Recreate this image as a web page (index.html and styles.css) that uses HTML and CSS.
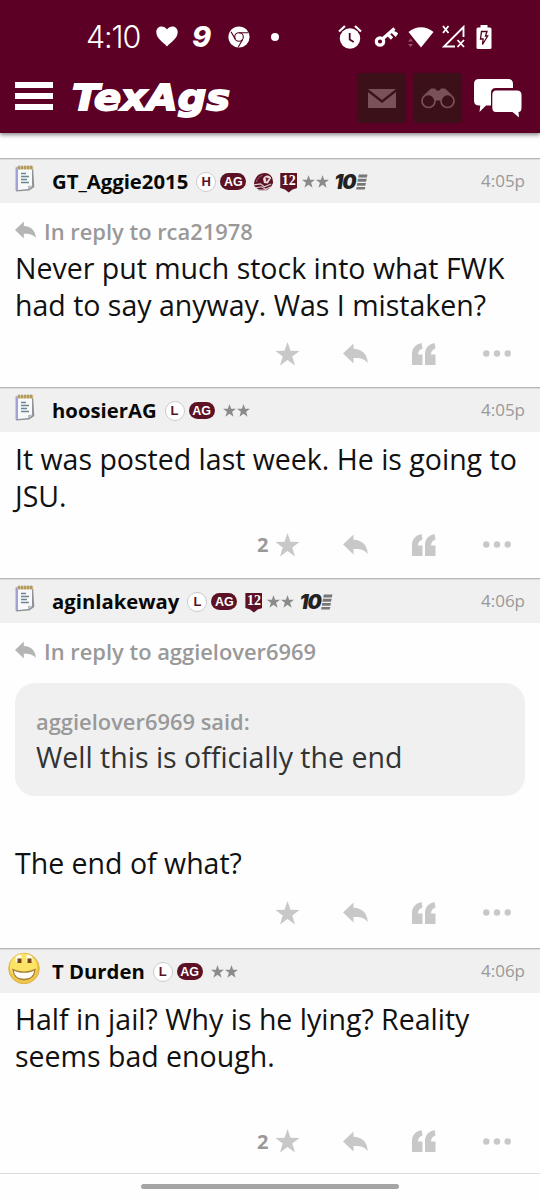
FILE: index.html
```html
<!DOCTYPE html>
<html lang="en">
<head>
<meta charset="utf-8">
<title>TexAgs</title>
<link rel="stylesheet" href="styles.css">
</head>
<body>
<svg class="defs" width="0" height="0" aria-hidden="true">
  <symbol id="star" viewBox="0 0 24 24"><path d="M12 0l3 8.800 9 .1-7.200 5.500L19.500 23.500 12 18.100 4.500 23.500 7.200 14.400 0 8.900l9-.1z"/></symbol>
  <symbol id="reply" viewBox="0 0 25 21"><path d="M0 10.500L10.500.5v5.200C18 5.700 24.500 10.500 24.800 20 21 15.500 17 14.700 10.500 15v5.500z"/></symbol>
  <symbol id="quote" viewBox="0 0 24 22"><path d="M9.500 0C3 1.500 0 5.500 0 11v11h10.500V11.500H6C6 8.500 7.500 6.500 10.500 5.500z"/><path d="M22.500 0C16 1.500 13 5.500 13 11v11h10.500V11.500H19c0-3 1.500-5 4.500-6z"/></symbol>
  <symbol id="dots" viewBox="0 0 28 7"><circle cx="3.300" cy="3.500" r="3.200"/><circle cx="14" cy="3.500" r="3.200"/><circle cx="24.700" cy="3.500" r="3.200"/></symbol>
  <symbol id="note" viewBox="0 0 20 27">
    <path d="M1 2.500L18 1l1.300 21-5 3.500L1 26.500z" fill="#8f9296"/>
    <path d="M.5 2.500h2.500v23H.5z" fill="#a3a2d6"/>
    <path d="M3 3h14v18.500L13.500 24 3 25z" fill="#f7f9fa"/>
    <path d="M13 24.500v-3.500l5-.5z" fill="#b9bcc0"/>
    <path d="M2 1.300h16v3H2z" fill="#d6bd78"/>
    <path d="M4 .5v4M7 .5v4M10 .5v4M13 .5v4M16 .5v4" stroke="#8b7a4c" stroke-width="1"/>
    <path d="M6 8.500h5M6 11.500h8M6 14.500h6M6 17.500h8" stroke="#6d8791" stroke-width="1.300"/>
  </symbol>
  <symbol id="smile" viewBox="0 0 32 32">
    <circle cx="16" cy="16.500" r="15.300" fill="#f0c64a" stroke="#d9aa38" stroke-width=".8"/>
    <ellipse cx="15.500" cy="14.500" rx="13.500" ry="13" fill="#fbe365"/>
    <path d="M7.500 7q1-5 6-4v7h-6zM18.500 3q5-1 6 4v3h-6z" fill="#fffbe6"/>
    <path d="M9.500 6.500h4v4.500h-4zM19.500 6.500h4v4.500h-4z" fill="#74431b"/>
    <path d="M5 17.500c2 1 4 1.800 5.500 2 3.500.8 7.500.8 11 0 1.500-.2 3.500-1 5.500-2-.5 6.500-4.500 10-11 10S5.500 24 5 17.500z" fill="#fffdf5" stroke="#a37a35" stroke-width="1.300"/>
  </symbol>
  <symbol id="helmet" viewBox="0 0 22 20">
    <path d="M1 14C1 5 6 .5 12.500.5 18 .5 21 5 21 11l-2 4-5 4H7z" fill="#5c1224"/>
    <path d="M10.500 6.500c2-4 7-4.500 8.500-.5l-3.500 5.500-4-.5z" fill="#ead9dc"/>
    <path d="M13 5l4 1-3 4z" fill="#7a2636"/>
    <path d="M1 13l7-1 4 3 7-3M3 16l6-1 4 2.500 6-2.500M5 18.500h10" stroke="#dccfd1" stroke-width="1.200" fill="none"/>
    <path d="M3.500 10C4.500 6 7 4 10 3" stroke="#a4626f" fill="none"/>
  </symbol>
  <symbol id="bars" viewBox="0 0 12 16">
    <path d="M2.800.5h8.700l-.7 3H2.200zM2 4.800h8.700l-.7 3H1.400zM1.300 9h8.700l-.7 2.800H.8zM.6 12.900h8.700l-.6 2.600H.1z" fill="#777"/>
  </symbol>
</svg>

<header class="top">
  <div class="status">
    <span class="clock">4:10</span>
    <svg class="s-heart" width="22" height="21" viewBox="0 0 22 21"><path d="M11 20.500C7 16 .3 12.500.3 6 .3-.2 8-1.500 11 3.500 14-1.500 21.700-.2 21.700 6c0 6.500-6.700 10-10.700 14.500z" fill="#fff"/></svg>
    <span class="s-nine">9</span>
    <svg class="s-chrome" width="22" height="22" viewBox="0 0 22 22"><circle cx="11" cy="11" r="10.600" fill="#fff"/><g fill="none" stroke="#500020" stroke-width="1.100"><circle cx="11" cy="11" r="4.300"/><path d="M3 5.800l4.300 7.300M11 6.700h9.500M14.700 13.200L10.300 21"/></g></svg>
    <i class="s-dot"></i>
    <svg class="s-alarm" width="24" height="24" viewBox="0 0 24 24"><circle cx="12" cy="13.500" r="10.200" fill="#fff"/><path d="M1 6.500L7 1M17 1l6 5.500" stroke="#fff" stroke-width="2.200"/><path d="M11.700 8v6.500l4 2.500" fill="none" stroke="#500020" stroke-width="1.800"/></svg>
    <svg class="s-key" width="24" height="22" viewBox="0 0 24 22"><circle cx="6" cy="15.500" r="3.700" fill="none" stroke="#fff" stroke-width="3.200"/><path d="M9 12.500L20.500 2.500M14 8.500l4 4M18 5l3.500 3.500 1.500-2" fill="none" stroke="#fff" stroke-width="3.200"/></svg>
    <svg class="s-wifi" width="26" height="22" viewBox="0 0 26 22"><path d="M.5 6c7-6.500 18-6.500 25 0L13 21.500z" fill="#fff"/><path d="M0 15.500l2.500-3 2.500 3zM0 18l2.500 3L5 18z" fill="#985069"/></svg>
    <svg class="s-signal" width="23" height="23" viewBox="0 0 23 23"><path d="M21.500 12V2L2 21.500h11" fill="none" stroke="#fff" stroke-width="1.900"/><path d="M1 1l5.500 7M6.500 1L1 8M15.500 15l6.500 7M22 15l-6.500 7" stroke="#fff" stroke-width="1.800"/></svg>
    <svg class="s-battery" width="16" height="24" viewBox="0 0 16 24"><path d="M4.500 0h7v2.500H14A1.500 1.500 0 0 1 15.500 4v18.500A1.500 1.500 0 0 1 14 24H2A1.500 1.500 0 0 1 .5 22.500V4A1.500 1.500 0 0 1 2 2.500h2.500z" fill="#fff"/><path d="M5.500 6.500H11l-1.500 4.500h2.200L6.500 19.500l.6-5.500H4.500z" fill="none" stroke="#500020" stroke-width="1.300"/></svg>
  </div>
  <div class="nav">
    <div class="burger"><i></i><i></i><i></i></div>
    <svg class="logo" width="162" height="44" viewBox="0 0 162 44"><text x="0" y="34" textLength="158" lengthAdjust="spacingAndGlyphs">TexAgs</text></svg>
    <div class="tile"><svg width="28" height="19" viewBox="0 0 28 19"><path d="M0 0h28L14 11z"/><path d="M0 3l14 11L28 3v16H0z"/></svg></div>
    <div class="tile"><svg width="34" height="21" viewBox="0 0 34 21"><g fill="none" stroke="#7a5059" stroke-width="1.700"><circle cx="7.500" cy="13" r="6.500"/><circle cx="26.500" cy="13" r="6.500"/></g><path d="M3 7L10 .5h4l1.500 2h3l1.500-2h4L31 7c-5-1.500-9 0-10.500 5.500h-7C12 7 8 5.500 3 7z"/></svg></div>
    <svg class="chat" width="48" height="39" viewBox="0 0 48 39"><path d="M5 0h29q5 0 5 5v4H22q-5 0-5 5v12.500h-5L5.500 33l.8-6.500H5q-5 0-5-5V5q0-5 5-5z" fill="#fff"/><path d="M22 11.500h21q4.500 0 4.500 4.500v12.500q0 4.500-3 4.500l.5 5.500-6.500-5.500H22q-3.700 0-3.700-4.500V16q0-4.500 3.700-4.500z" fill="#fff"/></svg>
  </div>
</header>

<main>
  <div class="prev"></div>

  <article class="post p1">
    <div class="head"><svg class="avatar"><use href="#note"/></svg><b class="name">GT_Aggie2015</b>
      <span class="badge">H</span><span class="ag">AG</span><svg class="helmet"><use href="#helmet"/></svg><span class="shield">12</span><svg class="st"><use href="#star"/></svg><svg class="st"><use href="#star"/></svg><span class="ten">10</span><svg class="bars"><use href="#bars"/></svg>
      <time>4:05p</time></div>
    <div class="body">
      <div class="re"><svg><use href="#reply"/></svg><span>In reply to rca21978</span></div>
      <p>Never put much stock into what FWK<br>had to say anyway. Was I mistaken?</p>
    </div>
    <div class="actions"><span class="count"></span><svg class="a-star"><use href="#star"/></svg><svg class="a-reply"><use href="#reply"/></svg><svg class="a-quote"><use href="#quote"/></svg><svg class="a-dots"><use href="#dots"/></svg></div>
  </article>

  <article class="post p2">
    <div class="head"><svg class="avatar"><use href="#note"/></svg><b class="name">hoosierAG</b>
      <span class="badge">L</span><span class="ag">AG</span><svg class="st"><use href="#star"/></svg><svg class="st"><use href="#star"/></svg>
      <time>4:05p</time></div>
    <div class="body"><p>It was posted last week. He is going to<br>JSU.</p></div>
    <div class="actions"><span class="count">2</span><svg class="a-star"><use href="#star"/></svg><svg class="a-reply"><use href="#reply"/></svg><svg class="a-quote"><use href="#quote"/></svg><svg class="a-dots"><use href="#dots"/></svg></div>
  </article>

  <article class="post p3">
    <div class="head"><svg class="avatar"><use href="#note"/></svg><b class="name">aginlakeway</b>
      <span class="badge">L</span><span class="ag">AG</span><span class="shield">12</span><svg class="st"><use href="#star"/></svg><svg class="st"><use href="#star"/></svg><span class="ten">10</span><svg class="bars"><use href="#bars"/></svg>
      <time>4:06p</time></div>
    <div class="body">
      <div class="re"><svg><use href="#reply"/></svg><span>In reply to aggielover6969</span></div>
      <blockquote><cite>aggielover6969 said:</cite><p>Well this is officially the end</p></blockquote>
      <p>The end of what?</p>
    </div>
    <div class="actions"><span class="count"></span><svg class="a-star"><use href="#star"/></svg><svg class="a-reply"><use href="#reply"/></svg><svg class="a-quote"><use href="#quote"/></svg><svg class="a-dots"><use href="#dots"/></svg></div>
  </article>

  <article class="post p4">
    <div class="head"><svg class="avatar face"><use href="#smile"/></svg><b class="name">T Durden</b>
      <span class="badge">L</span><span class="ag">AG</span><svg class="st"><use href="#star"/></svg><svg class="st"><use href="#star"/></svg>
      <time>4:06p</time></div>
    <div class="body"><p>Half in jail? Why is he lying? Reality<br>seems bad enough.</p></div>
    <div class="actions"><span class="count">2</span><svg class="a-star"><use href="#star"/></svg><svg class="a-reply"><use href="#reply"/></svg><svg class="a-quote"><use href="#quote"/></svg><svg class="a-dots"><use href="#dots"/></svg></div>
  </article>
</main>
<footer><i></i></footer>
</body>
</html>
```
FILE: styles.css
```css
* { box-sizing: border-box; }
body { margin: 0; width: 540px; height: 1200px; overflow: hidden; background: #fefefe; color: #111; font-family: "Open Sans", sans-serif; }
svg { flex: none; display: block; }
.defs { position: absolute; }
p { margin: 0; }

.top { position: relative; height: 133px; background: #5c0025; box-shadow: 0 2px 4px rgba(0,0,0,.45); }
.status { display: flex; align-items: center; height: 73px; padding-left: 86px; color: #fff; }
.clock { width: 70px; font: 300 30.500px/30px Inter, sans-serif; letter-spacing: -1.100px; white-space: nowrap; }
.s-nine { width: 22px; margin-left: 14px; font: italic 800 29px/30px Inter, sans-serif; }
.s-chrome { margin-left: 14px; }
.s-dot { width: 8px; height: 8px; margin-left: 21px; border-radius: 50%; background: #fff; }
.s-alarm { margin-left: 59px; }
.s-key { margin-left: 12px; }
.s-wifi { margin-left: 10px; }
.s-signal { margin-left: 8px; }
.s-battery { margin-left: 11px; }

.nav { display: flex; align-items: center; height: 50px; padding-left: 15px; }
.burger { display: grid; gap: 5px; width: 38px; margin-top: -5px; }
.burger i { height: 6px; background: #fff; }
.logo { margin: 0 123px 0 19px; overflow: visible; }
.logo text { font: italic bold 35px "DejaVu Sans", sans-serif; fill: #fff; stroke: #fff; stroke-width: 1.800px; }
.tile { display: grid; place-items: center; flex: none; width: 49px; height: 50px; margin-right: 7px; border-radius: 4px; background: #3b1018; }
.tile svg { fill: #7a5059; }
.chat { margin-left: 5px; }

.prev { height: 25px; }
.post { display: flex; flex-direction: column; border-top: 1px solid #b5b7b6; }
.p1 { height: 229px; }
.p2 { height: 191px; }
.p3 { height: 370px; }
.p4 { height: 225px; }
.head { display: flex; align-items: center; flex: none; height: 44px; padding: 0 15px; background: #f0f0f0; border-top: 1px solid #ddd; }
.avatar { width: 20px; height: 27px; margin: -6px 17px 0 0; }
.face { width: 32px; height: 32px; margin: -8px 12px 0 -7px; }
.name { margin: -2px 8px 0 0; font-size: 20.300px; line-height: 28px; color: #080808; white-space: nowrap; }
.badge { width: 20px; height: 20px; margin-right: 4px; border: 1px solid #ccc; border-radius: 50%; background: #fff; color: #5c1224; font: bold 13px/18px "Liberation Sans", sans-serif; text-align: center; }
.ag { width: 26px; height: 17px; margin-right: 8px; border-radius: 9px; background: #5c1224; color: #fff; font: bold 12.500px/18px "Liberation Sans", sans-serif; text-align: center; }
.helmet { width: 21px; height: 20px; margin: 1px 6px 0 -1px; }
.shield { width: 17px; height: 20px; margin: 2px 5px 0 0; background: #5c1224; clip-path: polygon(0 0, 100% 0, 100% 78%, 72% 85%, 50% 100%, 28% 85%, 0 78%); color: #fff; font: bold 14px/16px "Liberation Serif", serif; text-align: center; }
.st { width: 13px; height: 13px; margin-right: 1px; fill: #8b8b8b; }
.ten { width: 22px; margin-left: 4px; color: #222; font: italic 900 20px/20px Inter, sans-serif; letter-spacing: -1px; }
.bars { width: 12px; height: 16px; }
time { margin: -2px 0 0 auto; font-size: 17px; color: #999; }

.body { flex: 1; padding: 9px 15px 0; }
.body p { font-size: 28.500px; line-height: 36.500px; white-space: nowrap; }
.p1 .body, .p3 .body { padding-top: 13px; }
.re { display: flex; align-items: center; height: 33px; margin: -1px 0 1px; color: #999; font-size: 21.900px; font-weight: 600; line-height: 32px; }
.re svg { width: 21px; height: 18px; margin: -3px 8px 0 0; fill: #b5b5b5; }
.p1 .body p { padding-top: 1px; }
blockquote { height: 113px; margin: 15px 0 49px; padding: 23px 21px; border-radius: 20px; background: #f0f0f0; color: #999; }
cite { display: block; font-size: 21.900px; font-style: normal; font-weight: 600; line-height: 32px; }
blockquote p { padding-top: 1px; color: #333; }
.p4 .body { padding-top: 8px; }

.actions { display: flex; align-items: center; flex: none; height: 68px; padding: 0 0 7px 257px; fill: #c8c8c8; }
.p3 .actions { padding-bottom: 6px; }
.p4 .actions { height: 64px; padding-bottom: 0; }
.count { width: 18px; font-size: 20px; font-weight: 700; color: #999; }
.a-star { width: 25px; height: 24px; }
.a-reply { width: 25px; height: 21px; margin-left: 43px; }
.a-quote { width: 24px; height: 22px; margin-left: 44px; }
.a-dots { width: 28px; height: 7px; margin-left: 47px; }

footer { height: 28px; padding-top: 10px; border-top: 1px solid #ddd; }
footer i { display: block; width: 258px; height: 5px; margin-left: 141px; border-radius: 3px; background: #a5a5a5; }
```
